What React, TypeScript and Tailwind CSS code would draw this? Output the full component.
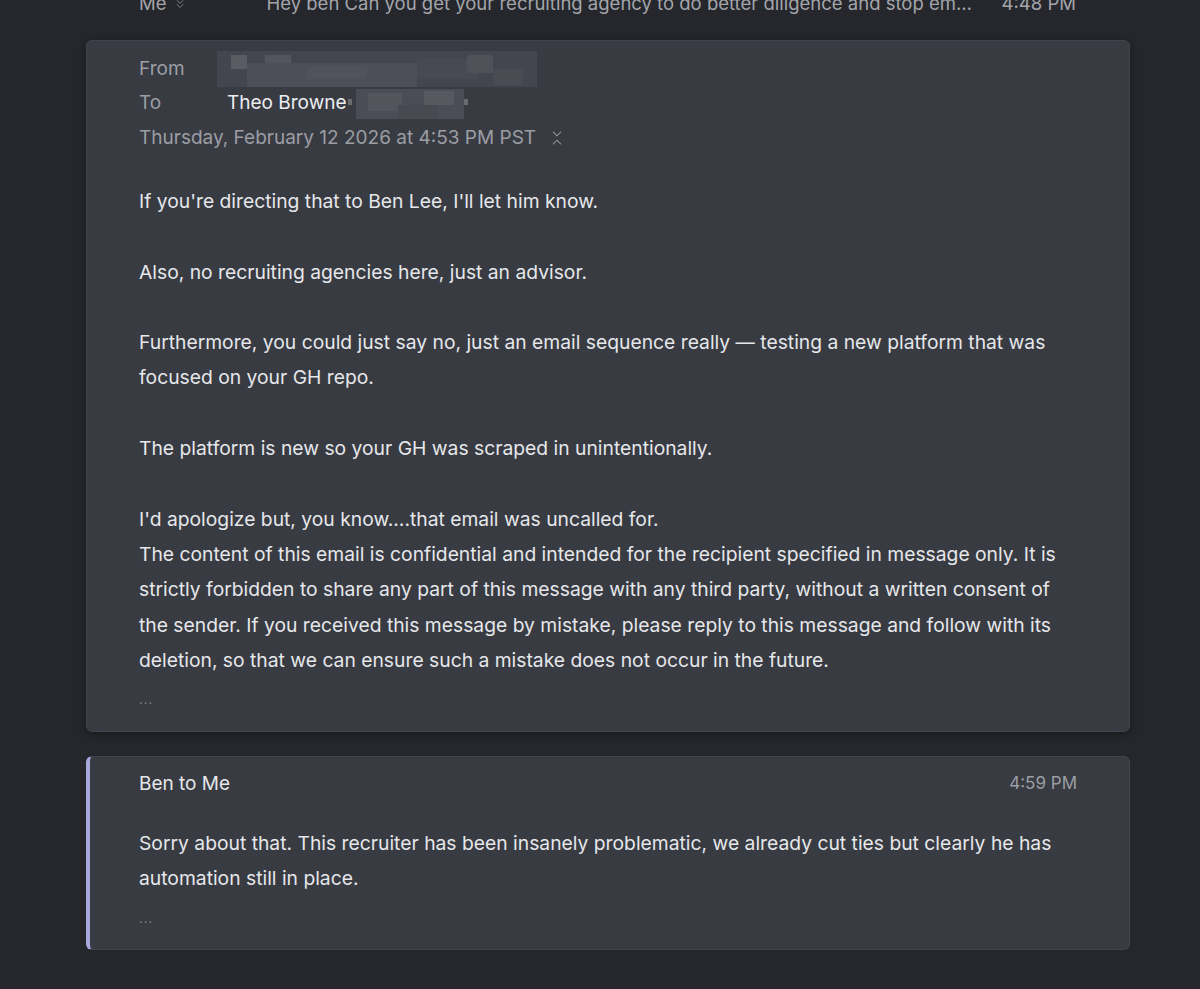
import { ChevronsDown, ChevronsDownUp } from "lucide-react";

const font = { fontFamily: '"Inter", "Noto Sans", sans-serif' };

function Redacted({ cells, w, h }: { cells: [number, number, number, number, string][]; w: number; h: number }) {
  return (
    <svg width={w} height={h} viewBox={`0 0 ${w} ${h}`} className="block">
      {cells.map(([x, y, cw, ch, c], i) => (
        <rect key={i} x={x} y={y} width={cw} height={ch} fill={c} />
      ))}
    </svg>
  );
}

const fromCells: [number, number, number, number, string][] = [
  [0, 0, 320, 36, "#43464e"],
  [14, 4, 16, 14, "#595c63"],
  [48, 4, 26, 12, "#52555c"],
  [30, 12, 170, 24, "#4c4f57"],
  [90, 16, 60, 12, "#50535a"],
  [200, 8, 60, 20, "#474a52"],
  [250, 4, 26, 18, "#4e5158"],
  [276, 18, 30, 16, "#484b52"],
];

const toCells: [number, number, number, number, string][] = [
  [0, 10, 4, 6, "#6a6c72"],
  [8, 0, 108, 30, "#4a4d55"],
  [20, 4, 34, 18, "#52555c"],
  [76, 2, 30, 14, "#565960"],
  [50, 16, 40, 14, "#474a51"],
  [116, 10, 4, 6, "#6a6c72"],
];

function Dots() {
  return <div className="mt-[11px] h-[20px] text-[13px] leading-[20px] tracking-[1px] text-[#7c7e85]">...</div>;
}

export default function App() {
  return (
    <div className="min-h-[989px] w-full overflow-hidden bg-[#25272c] text-[#e4e5e8]" style={font}>
      <div className="-mt-[14px] flex h-[36px] items-center pl-[139px] pr-[124px] text-[18.5px] text-[#a3a5ab]">
        <span>Me</span>
        <ChevronsDown className="ml-[6px] h-[14px] w-[14px] text-[#8c8e94]" strokeWidth={1.5} />
        <span className="ml-[80px] flex-1 truncate">
          Hey ben Can you get your recruiting agency to do better diligence and stop em…
        </span>
        <span className="ml-[20px]">4:48 PM</span>
      </div>

      <div className="ml-[86px] mt-[18px] w-[1044px] rounded-[6px] border border-[#41444c] bg-[#383b42] pb-[22px] pl-[52px] pr-[40px] pt-[10px] shadow-[0_2px_8px_rgba(0,0,0,0.35)]">
        <div className="flex h-[36px] items-center text-[19px] text-[#9c9ea4]">
          <span className="w-[78px]">From</span>
          <Redacted cells={fromCells} w={320} h={36} />
        </div>
        <div className="flex h-[33px] items-center text-[19px]">
          <span className="w-[88px] text-[#9c9ea4]">To</span>
          <span className="text-[#eceef0]">Theo Browne</span>
          <span className="ml-[2px]">
            <Redacted cells={toCells} w={120} h={30} />
          </span>
        </div>
        <div className="flex h-[36px] items-center text-[19px] text-[#9c9ea4]">
          <span>Thursday, February 12 2026 at 4:53 PM PST</span>
          <ChevronsDownUp className="ml-[12px] h-[18px] w-[18px] text-[#a0a2a8]" strokeWidth={1.4} />
        </div>

        <div className="mt-[28px] whitespace-pre text-[19.3px] leading-[35.3px] text-[#e6e7ea]">
          {`If you're directing that to Ben Lee, I'll let him know.

Also, no recruiting agencies here, just an advisor.

Furthermore, you could just say no, just an email sequence really — testing a new platform that was
focused on your GH repo.

The platform is new so your GH was scraped in unintentionally.

I'd apologize but, you know....that email was uncalled for.
The content of this email is confidential and intended for the recipient specified in message only. It is
strictly forbidden to share any part of this message with any third party, without a written consent of
the sender. If you received this message by mistake, please reply to this message and follow with its
deletion, so that we can ensure such a mistake does not occur in the future.`}
        </div>
        <Dots />
      </div>

      <div className="ml-[86px] mt-[24px] w-[1044px] rounded-[6px] border border-[#41444c] border-l-[4px] border-l-[#a9a8dc] bg-[#383b42] pb-[21px] pl-[49px] pr-[52px] pt-[12px]">
        <div className="flex h-[30px] items-center justify-between text-[19px]">
          <span className="text-[#e6e7ea]">Ben to Me</span>
          <span className="text-[17px] text-[#9c9ea4]">4:59 PM</span>
        </div>
        <div className="mt-[27px] whitespace-pre text-[19.3px] leading-[35.3px] text-[#e6e7ea]">
          {`Sorry about that. This recruiter has been insanely problematic, we already cut ties but clearly he has
automation still in place.`}
        </div>
        <Dots />
      </div>
    </div>
  );
}
